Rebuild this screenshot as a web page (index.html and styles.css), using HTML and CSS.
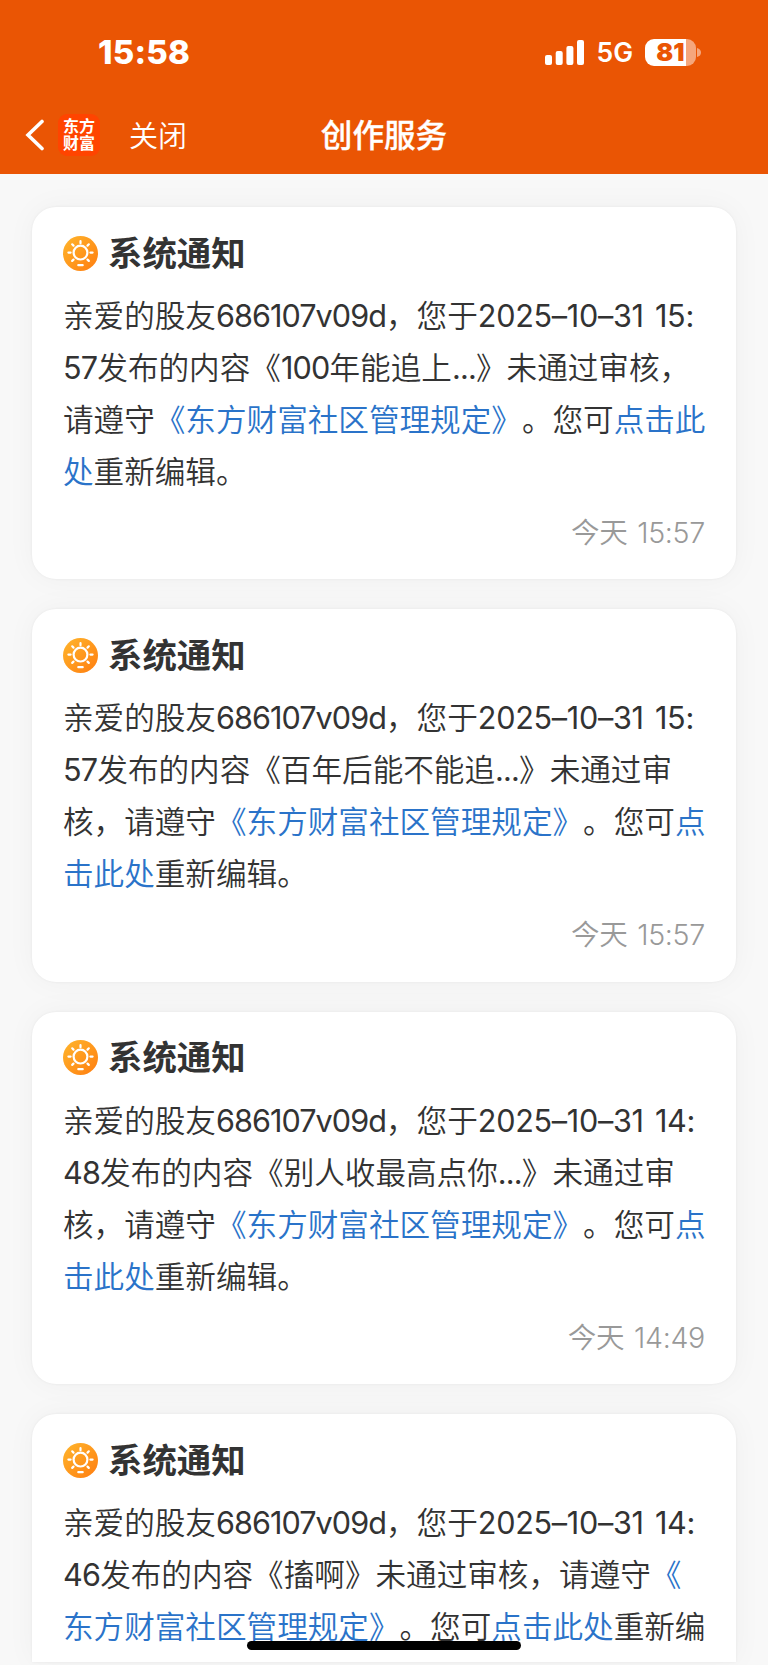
FILE: index.html
```
<!DOCTYPE html>
<html lang="zh-CN">
<head>
  <meta charset="utf-8">
  <title>创作服务</title>
  <link rel="stylesheet" href="styles.css">
</head>
<body>
  <svg class="defs" width="0" height="0">
    <defs>
      <linearGradient id="sun-bg" x1="0" y1="0" x2="1" y2="1">
        <stop offset="0" stop-color="#ffb62c"/>
        <stop offset="1" stop-color="#ff7d10"/>
      </linearGradient>
      <symbol id="sun" viewBox="0 0 35 35">
        <circle cx="17.5" cy="17.5" r="17.5" fill="url(#sun-bg)"/>
        <g fill="none" stroke="#fff" stroke-width="2.2" stroke-linecap="round">
          <circle cx="17.5" cy="16.6" r="6.9"/>
          <path d="M17.5 5.2v2M9.2 8.3l1.3 1.3M25.8 8.3l-1.3 1.3M5.4 16.6h2.2M27.4 16.6h2.2M9.2 24.9l1.3-1.3M25.8 24.9l-1.3-1.3M15.3 29.2h4.4"/>
        </g>
      </symbol>
    </defs>
  </svg>

  <header class="top">
    <div class="status">
      <span class="clock">15:58</span>
      <div class="status-right">
        <svg class="signal" width="39" height="25" viewBox="0 0 39 25" fill="#fff">
          <rect x="0" y="15" width="7" height="10" rx="2"/>
          <rect x="10.7" y="11" width="7" height="14" rx="2"/>
          <rect x="21.4" y="6" width="7" height="19" rx="2"/>
          <rect x="32" y="0" width="7" height="25" rx="2"/>
        </svg>
        <span class="net">5G</span>
        <div class="battery"><span class="level">81</span></div>
        <svg class="cap" width="4" height="9" viewBox="0 0 4 9"><path d="M0 0Q4 1 4 4.5T0 9z" fill="#f5a67c"/></svg>
      </div>
    </div>
    <nav class="nav">
      <svg class="back" width="20" height="32" viewBox="0 0 20 32"><path d="M17 2.5L3 16l14 13.5" fill="none" stroke="#fff" stroke-width="3.6" stroke-linecap="round"/></svg>
      <div class="logo"><span>东方</span><span>财富</span></div>
      <span class="close">关闭</span>
      <h1 class="page-title">创作服务</h1>
    </nav>
  </header>

  <main class="list">
    <section class="card">
      <h2 class="card-title"><svg class="icon"><use href="#sun"/></svg><span>系统通知</span></h2>
      <p class="msg">亲爱的股友<span class="n id">686107v09d</span>，您于<span class="n date">2025–10–31 15:</span><br>
        <span class="n">57</span>发布的内容《<span class="n">100</span>年能追上<span class="n">...</span>》未通过审核，<br>
        请遵守<a>《东方财富社区管理规定》</a>。您可<a>点击此</a><br>
        <a>处</a>重新编辑。</p>
      <div class="time">今天 15:57</div>
    </section>

    <section class="card">
      <h2 class="card-title"><svg class="icon"><use href="#sun"/></svg><span>系统通知</span></h2>
      <p class="msg">亲爱的股友<span class="n id">686107v09d</span>，您于<span class="n date">2025–10–31 15:</span><br>
        <span class="n">57</span>发布的内容《百年后能不能追<span class="n">...</span>》未通过审<br>
        核，请遵守<a>《东方财富社区管理规定》</a>。您可<a>点</a><br>
        <a>击此处</a>重新编辑。</p>
      <div class="time">今天 15:57</div>
    </section>

    <section class="card">
      <h2 class="card-title"><svg class="icon"><use href="#sun"/></svg><span>系统通知</span></h2>
      <p class="msg">亲爱的股友<span class="n id">686107v09d</span>，您于<span class="n date">2025–10–31 14:</span><br>
        <span class="n">48</span>发布的内容《别人收最高点你<span class="n">...</span>》未通过审<br>
        核，请遵守<a>《东方财富社区管理规定》</a>。您可<a>点</a><br>
        <a>击此处</a>重新编辑。</p>
      <div class="time">今天 14:49</div>
    </section>

    <section class="card last">
      <h2 class="card-title"><svg class="icon"><use href="#sun"/></svg><span>系统通知</span></h2>
      <p class="msg">亲爱的股友<span class="n id">686107v09d</span>，您于<span class="n date">2025–10–31 14:</span><br>
        <span class="n">46</span>发布的内容《搐啊》未通过审核，请遵守<a>《</a><br>
        <a>东方财富社区管理规定》</a>。您可<a>点击此处</a>重新编</p>
    </section>
  </main>
  <div class="home-bar"></div>
</body>
</html>
```
FILE: styles.css
```
* {
  box-sizing: border-box;
}

body {
  margin: 0;
  width: 768px;
  height: 1665px;
  overflow: hidden;
  background: #f8f8f8;
  color: #333;
  font-family: Inter, "Noto Sans CJK SC", sans-serif;
  text-spacing-trim: space-all;
}

.defs {
  position: absolute;
}

.top {
  height: 174px;
  background: #ea5504;
  color: #fff;
}

.status {
  display: flex;
  justify-content: space-between;
  align-items: center;
  height: 104px;
  padding: 0 67px 0 98px;
}

.clock {
  font-size: 33px;
  font-weight: 800;
  letter-spacing: 0.2px;
}

.status-right {
  display: flex;
  align-items: center;
}

.net {
  margin-left: 12px;
  font-size: 26.5px;
  font-weight: 600;
}

.battery {
  display: flex;
  align-items: center;
  width: 51px;
  height: 27px;
  margin-left: 12px;
  border-radius: 9px;
  background: linear-gradient(90deg, #fff 41px, #f5a67c 41px);
}

.level {
  width: 51px;
  text-align: center;
  color: #ea5504;
  font-size: 25px;
  font-weight: 900;
}

.cap {
  margin-left: 1px;
}

.nav {
  position: relative;
  display: flex;
  align-items: center;
  height: 62px;
  padding-left: 25px;
}

.logo {
  display: flex;
  flex-direction: column;
  align-items: center;
  justify-content: center;
  width: 42px;
  height: 42px;
  margin-left: 13px;
  border-radius: 9px;
  background: #ff4400;
  font-size: 16px;
  font-weight: 700;
  line-height: 17px;
}

.close {
  margin-left: 29px;
  padding-bottom: 2px;
  font-size: 29px;
  font-weight: 350;
}

.page-title {
  position: absolute;
  left: 0;
  right: 0;
  margin: 0;
  padding-bottom: 4px;
  text-align: center;
  font-size: 31.6px;
  font-weight: 500;
  -webkit-text-stroke: 0.3px #fff;
}

.list {
  display: flex;
  flex-direction: column;
  gap: 30px;
  padding: 33px 32px 0;
}

.card {
  height: 372.4px;
  padding: 24px 31px 0;
  border-radius: 24px;
  background: #fff;
  box-shadow: 0 0 3px rgba(0, 0, 0, 0.06), 0 0 30px rgba(0, 0, 0, 0.04);
}

.last {
  height: 248px;
  border-radius: 24px 24px 0 0;
}

.card-title {
  display: flex;
  align-items: center;
  gap: 10px;
  height: 44px;
  margin: 0 0 15px;
  font-size: 34.4px;
  font-weight: 700;
}

.card-title span {
  padding-bottom: 5px;
}

.icon {
  width: 35px;
  height: 35px;
}

.msg {
  margin: 0;
  font-size: 30.6px;
  font-weight: 350;
  line-height: 52px;
  white-space: nowrap;
}

.msg a {
  color: #2a73c9;
}

.n {
  font-weight: 400;
  letter-spacing: -0.8px;
}

.id {
  letter-spacing: -0.95px;
}

.date {
  letter-spacing: -0.3px;
  word-spacing: 3px;
}

.time {
  margin-top: 15px;
  text-align: right;
  color: #999;
  font-size: 28.6px;
  font-weight: 350;
  line-height: 40px;
  letter-spacing: -0.3px;
  word-spacing: 2px;
}

.home-bar {
  position: absolute;
  left: 247px;
  top: 1641px;
  width: 274px;
  height: 9px;
  border-radius: 5px;
  background: #000;
}
```
